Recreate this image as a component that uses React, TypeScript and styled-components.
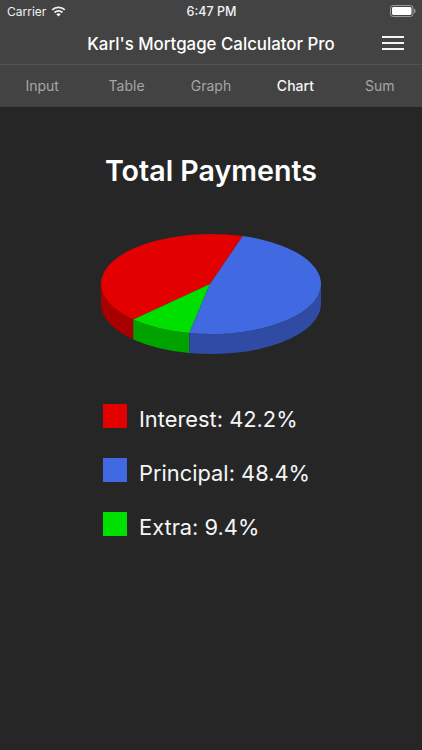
import styled, { createGlobalStyle } from "styled-components";

const GlobalStyle = createGlobalStyle`
  html, body {
    margin: 0;
    padding: 0;
    background: #262626;
  }
`;

const Screen = styled.div`
  width: 422px;
  height: 750px;
  overflow: hidden;
  display: flex;
  flex-direction: column;
  background: #262626;
  color: #fff;
  font-family: Inter, "Liberation Sans", sans-serif;
`;

const Header = styled.header`
  background: #434343;
`;

const StatusBar = styled.div`
  height: 22px;
  padding: 0 6px 0 7px;
  display: grid;
  grid-template-columns: 1fr auto 1fr;
  align-items: center;
  font-size: 12px;
  color: #f2f2f2;
`;

const Carrier = styled.div`
  display: flex;
  align-items: center;
  gap: 5px;
`;

const Clock = styled.div`
  font-weight: 500;
  font-size: 12.5px;
`;

const Battery = styled.div`
  justify-self: end;
  display: flex;
  line-height: 0;
`;

const NavBar = styled.div`
  height: 43px;
  padding: 0 18px;
  display: grid;
  grid-template-columns: 1fr auto 1fr;
  align-items: center;
  border-bottom: 1px solid #525252;
  box-sizing: border-box;
`;

const Title = styled.div`
  grid-column: 2;
  padding-top: 2px;
  font-size: 16.85px;
  font-weight: 500;
`;

const MenuSlot = styled.div`
  justify-self: end;
  display: flex;
  line-height: 0;
`;

const Tabs = styled.nav`
  height: 42px;
  padding-bottom: 2px;
  box-sizing: border-box;
  display: grid;
  grid-template-columns: repeat(5, 1fr);
  align-items: center;
`;

const Tab = styled.div<{ $active?: boolean }>`
  text-align: center;
  font-size: 14px;
  color: ${(p) => (p.$active ? "#f4f4f4" : "#a6a6a6")};
  font-weight: ${(p) => (p.$active ? 500 : 400)};
`;

const Content = styled.main`
  flex: 1;
  display: flex;
  flex-direction: column;
  align-items: center;
  padding-top: 46px;
`;

const Heading = styled.h1`
  margin: 0;
  font-size: 28.6px;
  line-height: 36px;
  font-weight: 600;
`;

const PieWrap = styled.div`
  margin-top: 44px;
  line-height: 0;
`;

const Legend = styled.ul`
  list-style: none;
  margin: 49px 0 0 103px;
  padding: 0;
  align-self: flex-start;
  display: flex;
  flex-direction: column;
  gap: 30px;
`;

const LegendRow = styled.li`
  display: flex;
  align-items: center;
  gap: 12px;
  height: 24px;
  font-size: 21.85px;
  font-weight: 400;
  color: #f6f6f6;
`;

const Swatch = styled.span<{ $color: string }>`
  width: 24px;
  height: 24px;
  background: ${(p) => p.$color};
`;

const LegendLabel = styled.span`
  position: relative;
  top: 3px;
`;

function WifiIcon() {
  return (
    <svg width="15" height="11" viewBox="0 0 15 11">
      <path d="M7.5 10.6 L5.3 8.2 A3.2 3.2 0 0 1 9.7 8.2 Z" fill="#f2f2f2" />
      <path d="M3.6 6.5 A5.6 5.6 0 0 1 11.4 6.5" fill="none" stroke="#f2f2f2" strokeWidth="1.8" />
      <path d="M1.2 3.9 A9 9 0 0 1 13.8 3.9" fill="none" stroke="#f2f2f2" strokeWidth="1.8" />
    </svg>
  );
}

function BatteryIcon() {
  return (
    <svg width="26" height="12" viewBox="0 0 26 12">
      <rect x="0.5" y="0.5" width="22.5" height="11" rx="2.6" fill="none" stroke="#9a9a9a" />
      <rect x="2" y="2" width="19.5" height="8" rx="1.4" fill="#fff" />
      <rect x="24" y="4" width="1.4" height="4" rx="0.7" fill="#9a9a9a" />
    </svg>
  );
}

function MenuIcon() {
  return (
    <svg width="22" height="14" viewBox="0 0 22 14">
      <rect x="0" y="0" width="22" height="2" fill="#f4f4f4" />
      <rect x="0" y="6" width="22" height="2" fill="#f4f4f4" />
      <rect x="0" y="12" width="22" height="2" fill="#f4f4f4" />
    </svg>
  );
}

// ellipse of the pie's top face, in page coordinates
const CX = 211;
const CY = 284;
const RX = 110;
const RY = 50;
const DEPTH = 20;
const HUB_X = 210;

// y on the lower or upper half of the ellipse for a given x, so arcs share one centre
const rimY = (x: number, lower: boolean) => {
  const dy = RY * Math.sqrt(1 - ((x - CX) / RX) ** 2);
  return lower ? CY + dy : CY - dy;
};

const arc = (x: number, y: number, sweep: 0 | 1) => `A${RX} ${RY} 0 0 ${sweep} ${x} ${y}`;

const redBlue = { x: 242.7, y: rimY(242.7, false) };
const redGreen = { x: 133.3, y: rimY(133.3, true) };
const greenBlue = { x: 189.3, y: rimY(189.3, true) };

const wallRed = `M${CX - RX} ${CY} V${CY + DEPTH} ${arc(redGreen.x, redGreen.y + DEPTH, 0)} V${redGreen.y} ${arc(CX - RX, CY, 1)} Z`;
const wallGreen = `M${redGreen.x} ${redGreen.y} V${redGreen.y + DEPTH} ${arc(greenBlue.x, greenBlue.y + DEPTH, 0)} V${greenBlue.y} ${arc(redGreen.x, redGreen.y, 1)} Z`;
const wallBlue = `M${greenBlue.x} ${greenBlue.y} V${greenBlue.y + DEPTH} ${arc(CX + RX, CY + DEPTH, 0)} V${CY} ${arc(greenBlue.x, greenBlue.y, 1)} Z`;

const topRed = `M${HUB_X} ${CY} L${redBlue.x} ${redBlue.y} ${arc(redGreen.x, redGreen.y, 0)} Z`;
const topGreen = `M${HUB_X} ${CY} L${redGreen.x} ${redGreen.y} ${arc(greenBlue.x, greenBlue.y, 0)} Z`;
const topBlue = `M${HUB_X} ${CY} L${greenBlue.x} ${greenBlue.y} ${arc(redBlue.x, redBlue.y, 0)} Z`;

function PieChart() {
  return (
    <svg width="222" height="122" viewBox="100 233 222 122">
      <path d={wallRed} fill="#a80000" />
      <path d={wallGreen} fill="#00a200" />
      <path d={wallBlue} fill="#2f4ba3" />
      <path d={topRed} fill="#e20000" />
      <path d={topGreen} fill="#00e000" />
      <path d={topBlue} fill="#4169e1" />
    </svg>
  );
}

const tabs = ["Input", "Table", "Graph", "Chart", "Sum"];

const legend = [
  { label: "Interest: 42.2%", color: "#e20000" },
  { label: "Principal: 48.4%", color: "#4169e1" },
  { label: "Extra: 9.4%", color: "#00e000" },
];

export default function App() {
  return (
    <>
      <GlobalStyle />
      <Screen>
        <Header>
          <StatusBar>
            <Carrier>
              Carrier
              <WifiIcon />
            </Carrier>
            <Clock>6:47 PM</Clock>
            <Battery>
              <BatteryIcon />
            </Battery>
          </StatusBar>
          <NavBar>
            <Title>Karl's Mortgage Calculator Pro</Title>
            <MenuSlot>
              <MenuIcon />
            </MenuSlot>
          </NavBar>
          <Tabs>
            {tabs.map((t) => (
              <Tab key={t} $active={t === "Chart"}>
                {t}
              </Tab>
            ))}
          </Tabs>
        </Header>
        <Content>
          <Heading>Total Payments</Heading>
          <PieWrap>
            <PieChart />
          </PieWrap>
          <Legend>
            {legend.map((item) => (
              <LegendRow key={item.label}>
                <Swatch $color={item.color} />
                <LegendLabel>{item.label}</LegendLabel>
              </LegendRow>
            ))}
          </Legend>
        </Content>
      </Screen>
    </>
  );
}
